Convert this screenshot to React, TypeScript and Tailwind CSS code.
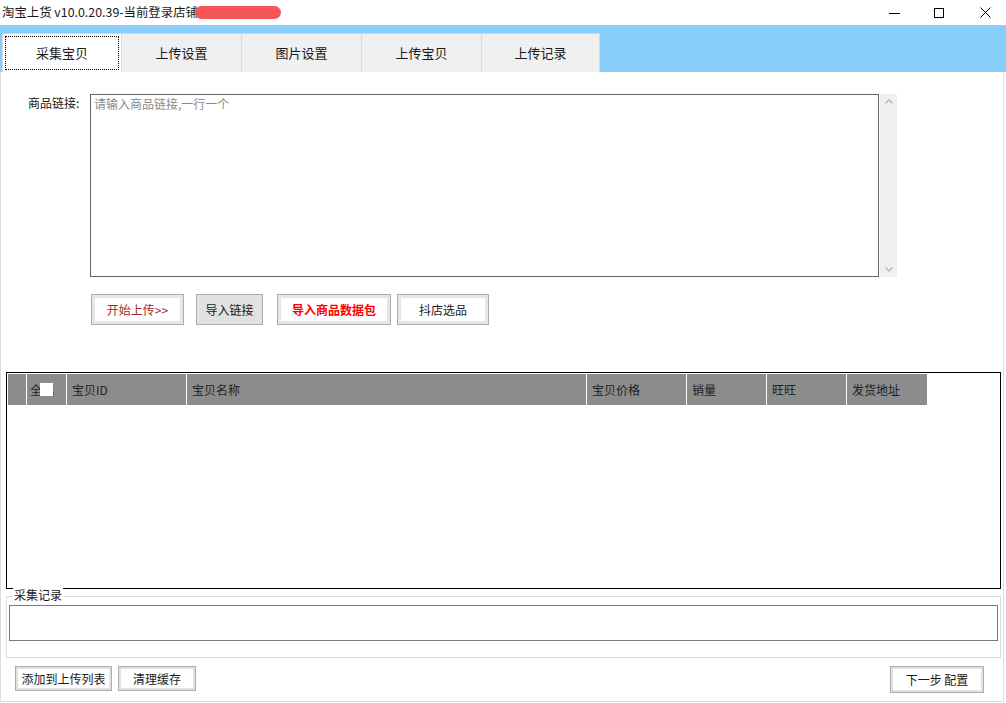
import React from 'react';

const FONT = { fontFamily: '"Microsoft YaHei", "Noto Sans CJK SC", "Liberation Sans", sans-serif' };

const TABS = ['采集宝贝', '上传设置', '图片设置', '上传宝贝', '上传记录'];

const COLUMNS = [
  { label: '宝贝ID', w: 'w-[120px]' },
  { label: '宝贝名称', w: 'w-[400px]' },
  { label: '宝贝价格', w: 'w-[100px]' },
  { label: '销量', w: 'w-[80px]' },
  { label: '旺旺', w: 'w-[80px]' },
  { label: '发货地址', w: 'w-[80px]' },
];

function WinButton({ children, className = '' }: { children: React.ReactNode; className?: string }) {
  return (
    <button
      className={`h-[31px] border border-[#adadad] p-[2px] ${className}`}
    >
      <span className="flex h-full w-full items-center justify-center border border-[#e6e6e6] text-[12px]">
        {children}
      </span>
    </button>
  );
}

export default function App() {
  return (
    <div className="w-[1006px] h-[703px] bg-white overflow-hidden text-[#1a1a1a]" style={FONT}>
      {/* title bar */}
      <div className="h-[25px] flex items-center justify-between">
        <div className="flex items-center pl-[2px] text-[12.4px] leading-none">
          <span>淘宝上货 v10.0.20.39-当前登录店铺:</span>
          <span className="ml-[-6px] h-[13px] w-[86px] rounded-full bg-[#f75555]" />
        </div>
        <div className="flex items-center h-full pr-[15px]">
          <svg width="11" height="10" viewBox="0 0 11 10"><path d="M0 5.5h11" stroke="#000" strokeWidth="1" /></svg>
          <svg className="ml-[34px]" width="10" height="10" viewBox="0 0 10 10"><rect x="0.5" y="0.5" width="9" height="9" fill="none" stroke="#000" strokeWidth="1" /></svg>
          <svg className="ml-[36px]" width="11" height="11" viewBox="0 0 11 11"><path d="M0.5 0.5l10 10M10.5 0.5l-10 10" stroke="#000" strokeWidth="1" /></svg>
        </div>
      </div>

      {/* tab strip */}
      <div className="h-[47px] bg-[#87cefa] flex items-end pl-[2px]">
        {TABS.map((t, i) =>
          i === 0 ? (
            <div key={t} className="w-[120px] h-[39px] bg-white border border-[#d9d9d9] border-b-0 p-[2px]">
              <div className="h-full w-full border border-dotted border-black flex items-center justify-center text-[13px]">
                {t}
              </div>
            </div>
          ) : (
            <div
              key={t}
              className="w-[120px] h-[39px] bg-[#f0f0f0] border border-[#d9d9d9] border-l-0 border-b-0 flex items-center justify-center text-[13px] last:w-[118px]"
            >
              {t}
            </div>
          )
        )}
      </div>

      {/* body */}
      <div className="w-[1004px] h-[630px] border-l border-r border-b border-[#dcdcdc] flex flex-col">
        <div className="flex mt-[22px] pl-[27px]">
          <div className="w-[62px] pt-[2px] text-[12px] leading-[14px]">商品链接:</div>
          <div className="w-[789px] h-[183px] border border-[#646464] px-[3px] py-[1px] text-[12px] text-[#8a8a8a] leading-[16px]">
            请输入商品链接,一行一个
          </div>
          <div className="w-[17px] h-[183px] ml-[1px] bg-[#f0f0f0] flex flex-col items-center justify-between py-[5px]">
            <svg width="8" height="5" viewBox="0 0 8 5"><path d="M0.5 4.5L4 1l3.5 3.5" fill="none" stroke="#b5b5b5" strokeWidth="1.3" /></svg>
            <svg width="8" height="5" viewBox="0 0 8 5"><path d="M0.5 0.5L4 4l3.5-3.5" fill="none" stroke="#b5b5b5" strokeWidth="1.3" /></svg>
          </div>
        </div>

        <div className="flex mt-[17px] ml-[90px]">
          <WinButton className="w-[93px] bg-[#e6e6e6] [&>span]:bg-white text-[#a52a2a]">开始上传&gt;&gt;</WinButton>
          <button className="w-[67px] h-[31px] ml-[12px] border border-[#adadad] bg-[#e1e1e1] text-[12px]">导入链接</button>
          <WinButton className="w-[114px] ml-[14px] bg-[#e6e6e6] [&>span]:bg-white text-[#ff0000] font-bold">导入商品数据包</WinButton>
          <WinButton className="w-[92px] ml-[6px] bg-[#e6e6e6] [&>span]:bg-white">抖店选品</WinButton>
        </div>

        {/* grid */}
        <div className="mt-[47px] ml-[5px] w-[995px] h-[217px] border border-black p-[1px]">
          <div className="flex h-[31px] text-[12px] text-[#1e1e1e]">
            <div className="w-[19px] h-full bg-[#8c8c8c] border-r border-white" />
            <div className="w-[40px] h-full bg-[#8c8c8c] border-r border-white relative flex items-center pl-[3px]">
              <span>全选</span>
              <span className="absolute left-[13px] top-[9px] w-[13px] h-[13px] bg-white" />
            </div>
            {COLUMNS.map(c => (
              <div key={c.label} className={`${c.w} h-full bg-[#8c8c8c] border-r border-white flex items-center pl-[5px] last:border-r-0`}>
                {c.label}
              </div>
            ))}
          </div>
        </div>

        {/* group box */}
        <div className="relative mt-[7px] ml-[5px] w-[995px] h-[62px] border border-[#dcdcdc] px-[2px] pt-[8px]">
          <span className="absolute left-[6px] top-[-9px] bg-white px-[1px] text-[12px] leading-[14px]">采集记录</span>
          <div className="h-[36px] border border-[#7a7a7a]" />
        </div>

        <div className="flex mt-[8px] ml-[14px] mr-[19px]">
          <button className="w-[97px] h-[25px] border border-[#adadad] bg-[#e1e1e1] p-[2px]">
            <span className="flex h-full items-center justify-center bg-white text-[12px]">添加到上传列表</span>
          </button>
          <button className="w-[78px] h-[25px] ml-[6px] border border-[#adadad] bg-[#e1e1e1] p-[2px]">
            <span className="flex h-full items-center justify-center bg-white text-[12px]">清理缓存</span>
          </button>
          <button className="w-[94px] h-[27px] ml-auto border border-[#adadad] bg-[#e1e1e1] p-[2px]">
            <span className="flex h-full items-center justify-center bg-white text-[12px]">下一步 配置</span>
          </button>
        </div>
      </div>
    </div>
  );
}
